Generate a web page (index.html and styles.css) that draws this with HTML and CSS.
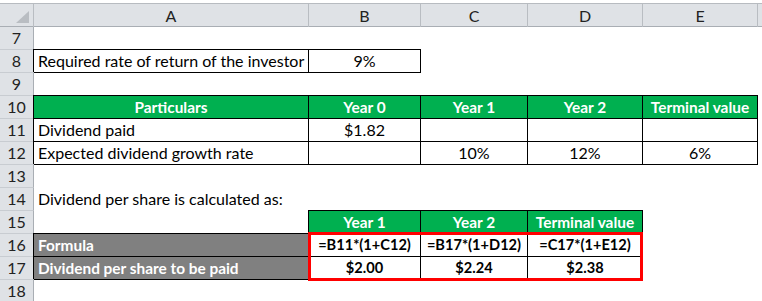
FILE: index.html
```html
<!DOCTYPE html>
<html>
<head>
<meta charset="utf-8">
<link rel="stylesheet" href="styles.css">
</head>
<body>
<div class="sheet">
  <div class="colhead">
    <div class="corner"><svg width="33" height="23" viewBox="0 0 33 23"><polygon points="29,7 29,19 16,19" fill="#b9bdc2"/></svg></div>
    <div class="ch">A</div>
    <div class="ch sep">B</div>
    <div class="ch sep">C</div>
    <div class="ch sep">D</div>
    <div class="ch sep">E</div>
    <div class="ch sep"></div>
  </div>
  <div class="row first"><div class="rh">7</div></div>
  <div class="row"><div class="rh">8</div><div class="c bd a">Required rate of return of the investor</div><div class="c bd ctr">9%</div></div>
  <div class="row"><div class="rh">9</div></div>
  <div class="row"><div class="rh">10</div><div class="c bd a ctr green">Particulars</div><div class="c bd ctr green">Year 0</div><div class="c bd ctr green">Year 1</div><div class="c bd ctr green">Year 2</div><div class="c bd ctr green">Terminal value</div></div>
  <div class="row"><div class="rh">11</div><div class="c bd a">Dividend paid</div><div class="c bd ctr">$1.82</div><div class="c bd"></div><div class="c bd"></div><div class="c bd"></div></div>
  <div class="row"><div class="rh">12</div><div class="c bd a">Expected dividend growth rate</div><div class="c bd"></div><div class="c bd ctr">10%</div><div class="c bd ctr">12%</div><div class="c bd ctr">6%</div></div>
  <div class="row"><div class="rh">13</div></div>
  <div class="row"><div class="rh">14</div><div class="c">Dividend per share is calculated as:</div></div>
  <div class="row"><div class="rh">15</div><div class="c"></div><div class="c bd ctr green">Year 1</div><div class="c bd ctr green">Year 2</div><div class="c bd ctr green">Terminal value</div></div>
  <div class="row"><div class="rh">16</div><div class="c bd a gray">Formula</div><div class="c bd ctr strong">=B11*(1+C12)</div><div class="c bd ctr strong">=B17*(1+D12)</div><div class="c bd ctr strong">=C17*(1+E12)</div></div>
  <div class="row"><div class="rh">17</div><div class="c bd a gray">Dividend per share to be paid</div><div class="c bd ctr strong">$2.00</div><div class="c bd ctr strong">$2.24</div><div class="c bd ctr strong">$2.38</div></div>
  <div class="row"><div class="rh">18</div></div>
  <div class="hl"></div>
</div>
</body>
</html>
```
FILE: styles.css
```css
* { box-sizing: border-box; }
html, body { margin: 0; padding: 0; background: #ffffff; }
body {
  font-family: Lato, "Liberation Sans", sans-serif;
  font-size: 16px;
  color: #000;
  width: 762px;
  height: 301px;
  overflow: hidden;
}
.sheet {
  position: relative;
  padding-top: 3px;
  background: #ffffff;
}
.colhead, .row {
  display: grid;
  grid-template-columns: 34px 274px 112px 107px 115px 115px 1fr;
}
.colhead {
  height: 24px;
  background: #dfe2e6;
  border-top: 1px solid #b7bbc0;
  border-bottom: 1px solid #a9aeb4;
}
.corner {
  border-right: 1px solid #b9bdc2;
  display: flex;
}
.corner svg { display: block; }
.ch {
  display: flex;
  align-items: center;
  justify-content: center;
  color: #222;
  line-height: 18px;
  padding-top: 1px;
}
.ch.sep { border-left: 1px solid #b9bdc2; }
.row { height: 23px; }
.row.first { height: 22px; }
.rh {
  background: #dfe2e6;
  border-right: 1px solid #a9aeb4;
  border-top: 1px solid #c8ccd1;
  display: flex;
  align-items: flex-end;
  justify-content: center;
  padding-bottom: 2px;
  line-height: 18px;
  color: #222;
}
.row.first .rh { border-top: 0; }
.c {
  display: flex;
  align-items: flex-end;
  padding: 0 3px 2px 4px;
  line-height: 18px;
  white-space: nowrap;
  min-width: 0;
}
.c.bd {
  border: 1px solid #000;
  margin: 0 -1px -1px 0;
  padding-left: 3px;
}
.c.a { margin-left: -1px; padding-left: 4px; }
.ctr { justify-content: center; padding-left: 0; padding-right: 0; }
.c.bd.ctr { padding-left: 0; padding-right: 0; }
.green {
  background: #00b050;
  color: #ffffff;
  font-weight: 700;
  font-size: 15.4px;
}
.gray {
  background: #808080;
  color: #ffffff;
  font-weight: 700;
  font-size: 15.4px;
}
.strong { font-weight: 700; font-size: 14.6px; }
.hl {
  position: absolute;
  left: 308px;
  top: 232px;
  width: 335px;
  height: 49px;
  border: 3px solid #ff0000;
  pointer-events: none;
}
```
